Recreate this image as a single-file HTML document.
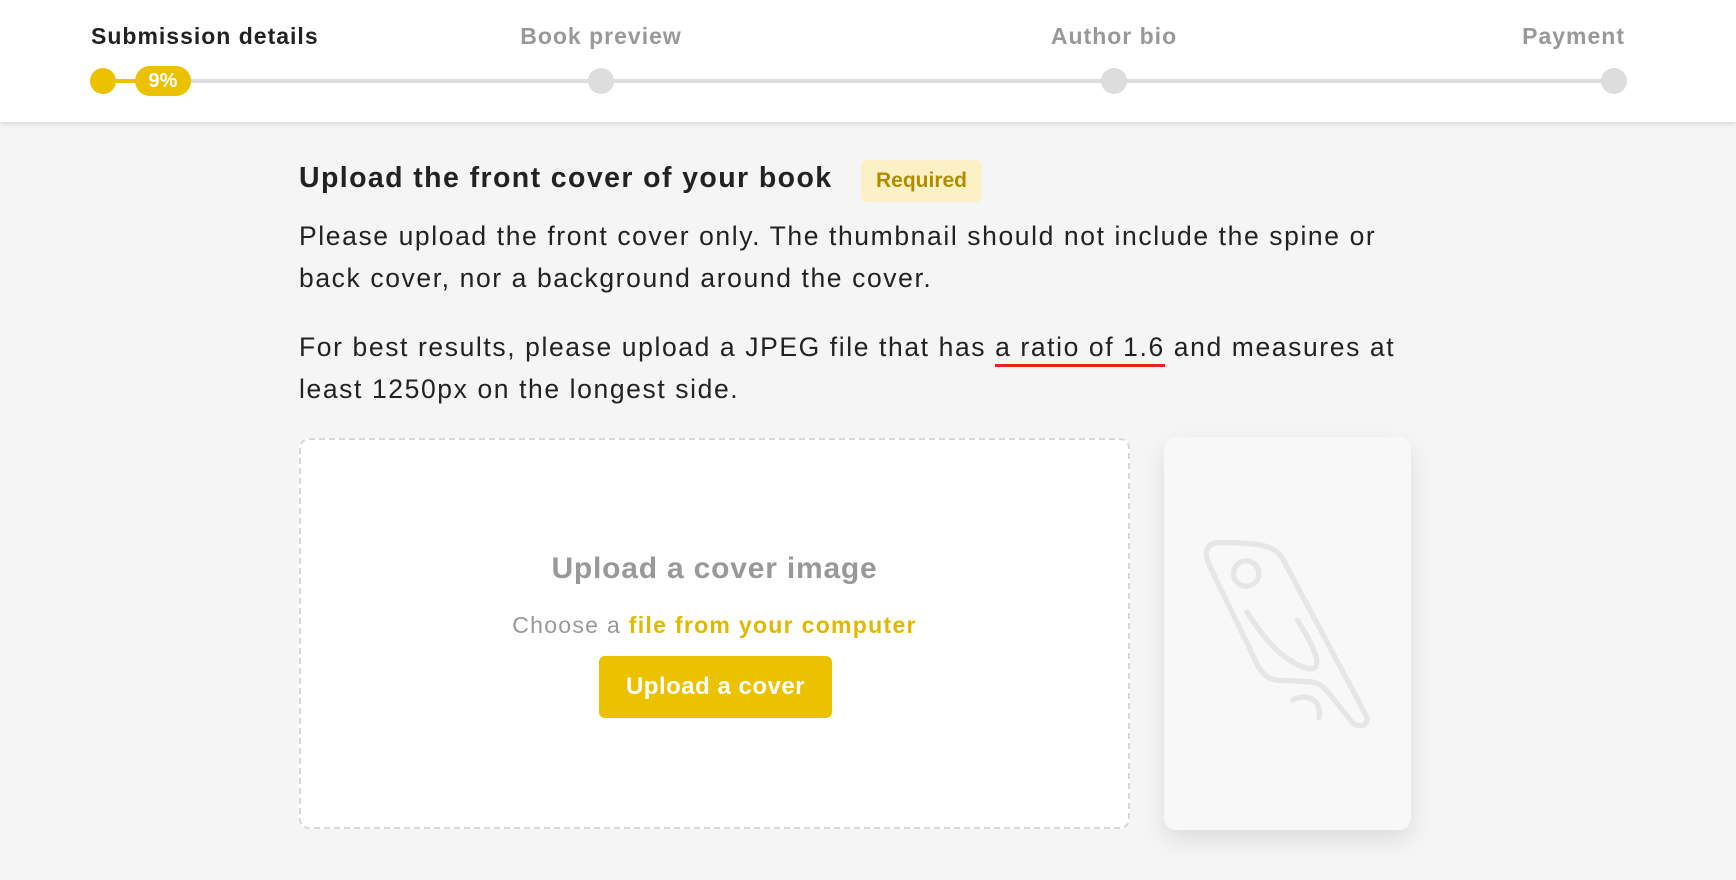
<!DOCTYPE html>
<html><head><style>
*{margin:0;padding:0;box-sizing:border-box}
body{width:1736px;height:880px;background:#f5f5f5;font-family:"Liberation Sans",sans-serif;position:relative;overflow:hidden;color:#222}
.hdr{position:absolute;left:0;top:0;width:1736px;height:122px;background:#fff;box-shadow:0 2px 5px rgba(0,0,0,.12)}
.lbl{position:absolute;top:23px;font-size:23px;font-weight:bold;color:#999;white-space:nowrap;letter-spacing:1px}
.line{position:absolute;top:79px;height:4px;background:#ddd}
.dot{position:absolute;top:68px;width:26px;height:26px;border-radius:50%;background:#ddd}
.abs{position:absolute}
p.t{position:absolute;left:299px;font-size:26.5px;line-height:42px;color:#222;width:1200px;letter-spacing:1.6px;white-space:nowrap}
</style></head><body>
<div class="hdr">
<div class="lbl" style="left:91px;color:#222">Submission details</div>
<div class="lbl" style="left:601px;transform:translateX(-50%)">Book preview</div>
<div class="lbl" style="left:1114px;transform:translateX(-50%)">Author bio</div>
<div class="lbl" style="right:111px">Payment</div>
<div class="line" style="left:103px;width:1511px"></div>
<div class="line" style="left:103px;width:60px;background:#ecc100"></div>
<div class="dot" style="left:90px;background:#ecc100"></div>
<div class="abs" style="left:135px;top:66px;width:56px;height:30px;border-radius:15px;background:#ecc100;color:#fff;font-weight:bold;font-size:20px;text-align:center;line-height:30px">9%</div>
<div class="dot" style="left:588px"></div>
<div class="dot" style="left:1101px"></div>
<div class="dot" style="left:1601px"></div>
</div>
<div class="abs" style="left:299px;top:160px;font-size:28.5px;font-weight:bold;line-height:36px;letter-spacing:1.4px;white-space:nowrap">Upload the front cover of your book</div>
<div class="abs" style="left:861px;top:160px;width:121px;height:42px;border-radius:6px;background:#fcf1c6;color:#b08d00;font-size:21px;font-weight:bold;text-align:center;line-height:42px">Required</div>
<p class="t" style="top:215px">Please upload the front cover only. The thumbnail should not include the spine or<br>back cover, nor a background around the cover.</p>
<p class="t" style="top:326px">For best results, please upload a JPEG file that has <span style="border-bottom:3px solid #e8231a;padding-bottom:2px">a ratio of 1.6</span> and measures at<br>least 1250px on the longest side.</p>
<div class="abs" style="left:299px;top:438px;width:831px;height:391px;border:2px dashed #d8d8d8;border-radius:10px;background:#fff">
<div class="abs" style="left:0;width:100%;top:112px;text-align:center;font-size:30px;font-weight:bold;color:#999;letter-spacing:0.8px">Upload a cover image</div>
<div class="abs" style="left:0;width:100%;top:172px;text-align:center;font-size:23px;color:#999;letter-spacing:1.3px">Choose a <span style="color:#e2b800;font-weight:bold">file from your computer</span></div>
<div class="abs" style="left:298px;top:216px;width:233px;height:62px;border-radius:6px;background:#ecc100;color:#fff;font-size:24px;font-weight:bold;text-align:center;line-height:62px;letter-spacing:0.5px">Upload a cover</div>
</div>
<div class="abs" style="left:1164px;top:437px;width:247px;height:393px;border-radius:12px;background:#f8f8f8;box-shadow:0 10px 24px rgba(0,0,0,.1)">
<svg width="247" height="393" viewBox="42 20 740 1180" fill="none" stroke="#e6e6e6" stroke-width="16" stroke-linecap="round">
<path d="M210 337 C172 337 160 360 175 400 L320 700 C335 735 360 750 385 750 L480 755 C510 757 525 775 545 800 L605 875 C625 895 655 890 650 860 L400 390 C375 345 330 337 210 337 Z"/>
<circle cx="288" cy="430" r="38"/>
<path d="M290 545 C350 640 410 700 475 715 C500 720 505 700 495 670 C480 630 460 600 442 570"/>
<path d="M428 810 C460 790 515 800 507 862"/>
</svg>
</div>
</body></html>
